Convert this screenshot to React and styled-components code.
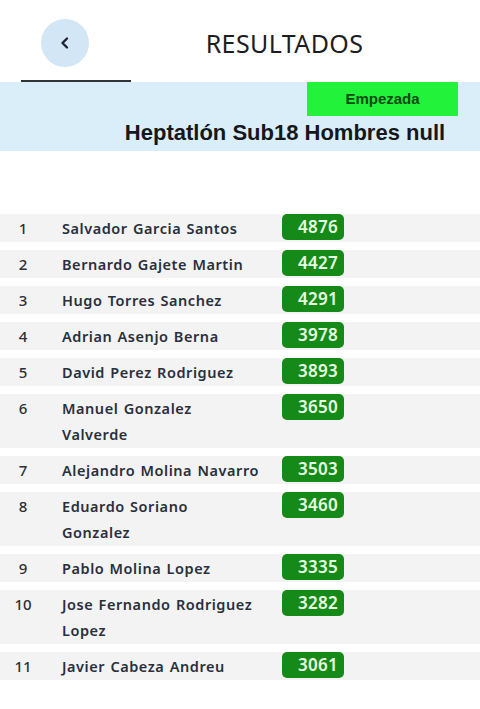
import React from 'react';
import styled, { createGlobalStyle } from 'styled-components';

const GlobalStyle = createGlobalStyle`
    html, body {
        margin: 0;
        padding: 0;
        background: #ffffff;
    }
    body {
        font-family: "Noto Sans", "Liberation Sans", sans-serif;
        color: #222;
    }
`;

const results = [
    { pos: 1, name: 'Salvador Garcia Santos', points: 4876 },
    { pos: 2, name: 'Bernardo Gajete Martin', points: 4427 },
    { pos: 3, name: 'Hugo Torres Sanchez', points: 4291 },
    { pos: 4, name: 'Adrian Asenjo Berna', points: 3978 },
    { pos: 5, name: 'David Perez Rodriguez', points: 3893 },
    { pos: 6, name: 'Manuel Gonzalez Valverde', points: 3650 },
    { pos: 7, name: 'Alejandro Molina Navarro', points: 3503 },
    { pos: 8, name: 'Eduardo Soriano Gonzalez', points: 3460 },
    { pos: 9, name: 'Pablo Molina Lopez', points: 3335 },
    { pos: 10, name: 'Jose Fernando Rodriguez Lopez', points: 3282 },
    { pos: 11, name: 'Javier Cabeza Andreu', points: 3061 },
];

const Page = styled.div`
    width: 480px;
    min-height: 709px;
    background: #fff;
`;

const Header = styled.header`
    display: flex;
    align-items: center;
    height: 80px;
    padding-left: 41px;
    padding-top: 5px;
    box-sizing: border-box;
`;

const BackButton = styled.button`
    width: 48px;
    height: 48px;
    border-radius: 50%;
    border: none;
    background: #d3e6f6;
    display: flex;
    align-items: center;
    justify-content: center;
    padding: 0;
    cursor: pointer;
`;

const PageTitle = styled.h1`
    flex: 1;
    margin: 0;
    text-align: center;
    font-family: "Noto Sans", sans-serif;
    font-weight: 400;
    font-size: 25px;
    letter-spacing: 0.4px;
    color: #1d1d1f;
`;

const TabLine = styled.div`
    width: 110px;
    height: 1.5px;
    margin-left: 21px;
    background: #2f3438;
`;

const EventBand = styled.section`
    background: #daeefa;
    height: 69px;
    display: flex;
    flex-direction: column;
    align-items: flex-end;
`;

const StatusBadge = styled.div`
    width: 151px;
    height: 34px;
    margin-right: 22px;
    background: #22f23a;
    color: #0b4a12;
    font-family: "Liberation Sans", Arial, sans-serif;
    font-weight: 700;
    font-size: 15px;
    display: flex;
    align-items: center;
    justify-content: center;
`;

const EventTitle = styled.h2`
    align-self: stretch;
    margin: 3px 0 0;
    padding-left: 90px;
    text-align: center;
    font-family: "Liberation Sans", Arial, sans-serif;
    font-weight: 700;
    font-size: 22px;
    line-height: 28px;
    color: #15171a;
`;

const ResultList = styled.ul`
    list-style: none;
    margin: 63px 0 0;
    padding: 0;
`;

const Row = styled.li`
    display: grid;
    grid-template-columns: 46px 236px 62px 1fr;
    align-items: start;
    background: #f3f3f3;
    margin-bottom: 8px;
    padding: 1px 0;
`;

const Position = styled.span`
    text-align: center;
    font-size: 15px;
    font-weight: 500;
    line-height: 26px;
    color: #2b2f38;
`;

const Athlete = styled.span`
    padding-left: 16px;
    padding-right: 22px;
    font-size: 14.5px;
    font-weight: 600;
    letter-spacing: 0.55px;
    word-spacing: 1px;
    line-height: 26px;
    color: #2a2f3c;
`;

const Points = styled.span`
    height: 26px;
    margin-top: -1px;
    border-radius: 5px;
    background: #168a18;
    color: #e6fde2;
    font-size: 17px;
    font-weight: 600;
    letter-spacing: 0.3px;
    line-height: 26px;
    text-align: right;
    padding-right: 6px;
`;

const ChevronLeft = () => (
    <svg width="16" height="16" viewBox="0 0 16 16" fill="none">
        <path d="M10 3.5 L5.5 8 L10 12.5" stroke="#1c2430" strokeWidth="2.4" strokeLinecap="round" strokeLinejoin="round" />
    </svg>
);

const App = () => {
    return (
        <Page>
            <GlobalStyle />
            <Header>
                <BackButton aria-label="Volver">
                    <ChevronLeft />
                </BackButton>
                <PageTitle>RESULTADOS</PageTitle>
            </Header>
            <TabLine />
            <EventBand>
                <StatusBadge>Empezada</StatusBadge>
                <EventTitle>Heptatlón Sub18 Hombres null</EventTitle>
            </EventBand>
            <ResultList>
                {results.map(r => (
                    <Row key={r.pos}>
                        <Position>{r.pos}</Position>
                        <Athlete>{r.name}</Athlete>
                        <Points>{r.points}</Points>
                    </Row>
                ))}
            </ResultList>
        </Page>
    );
};

export default App;
